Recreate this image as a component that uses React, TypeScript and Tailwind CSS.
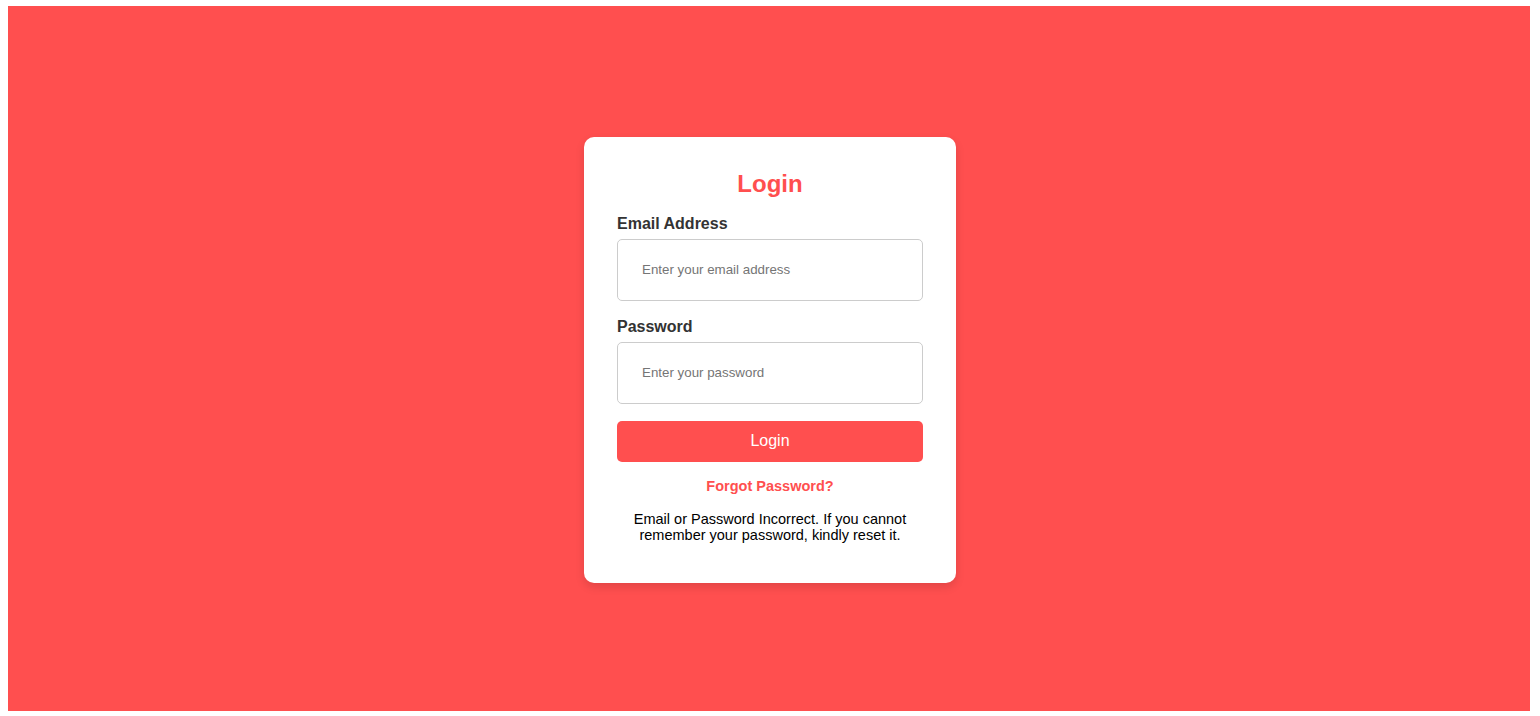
import React from 'react';

const App: React.FC = () => {
  return (
    <div className="h-[716px] bg-white pl-2 pr-[10px] pt-[6px] pb-[5px] font-['Liberation_Sans',Arial,sans-serif]">
      <div className="flex h-full items-center justify-center bg-[#ff4f4f] pl-[2px] pt-[2px]">
        <div className="w-[372px] rounded-[10px] bg-white px-[33px] pt-[33px] pb-[40px] shadow-[0_4px_10px_rgba(0,0,0,0.12)]">
          <h2 className="text-center text-[24px] font-bold leading-[28px] text-[#ff4f4f]">Login</h2>

          {/* Email */}
          <div className="mt-[17px]">
            <label className="block text-[16px] font-bold leading-[18px] text-[#333]">Email Address</label>
            <input
              type="email"
              placeholder="Enter your email address"
              className="mt-[6px] block h-[62px] w-full rounded-[5px] border border-[#ccc] px-6 text-[13.33px] text-[#333] outline-none placeholder:text-[#757575]"
            />
          </div>

          {/* Password */}
          <div className="mt-[17px]">
            <label className="block text-[16px] font-bold leading-[18px] text-[#333]">Password</label>
            <input
              type="password"
              placeholder="Enter your password"
              className="mt-[6px] block h-[62px] w-full rounded-[5px] border border-[#ccc] px-6 text-[13.33px] text-[#333] outline-none placeholder:text-[#757575]"
            />
          </div>

          <button className="mt-[17px] block h-[41px] w-full rounded-[5px] bg-[#ff4f4f] text-[16px] text-white">
            Login
          </button>

          <div className="mt-4 text-center text-[14.5px] font-bold leading-4 text-[#ff4f4f]">
            <a href="#">Forgot Password?</a>
          </div>

          <p className="mt-[17px] text-center text-[14.5px] leading-4 text-black">
            Email or Password Incorrect. If you cannot remember your password, kindly reset it.
          </p>
        </div>
      </div>
    </div>
  );
};

export default App;
